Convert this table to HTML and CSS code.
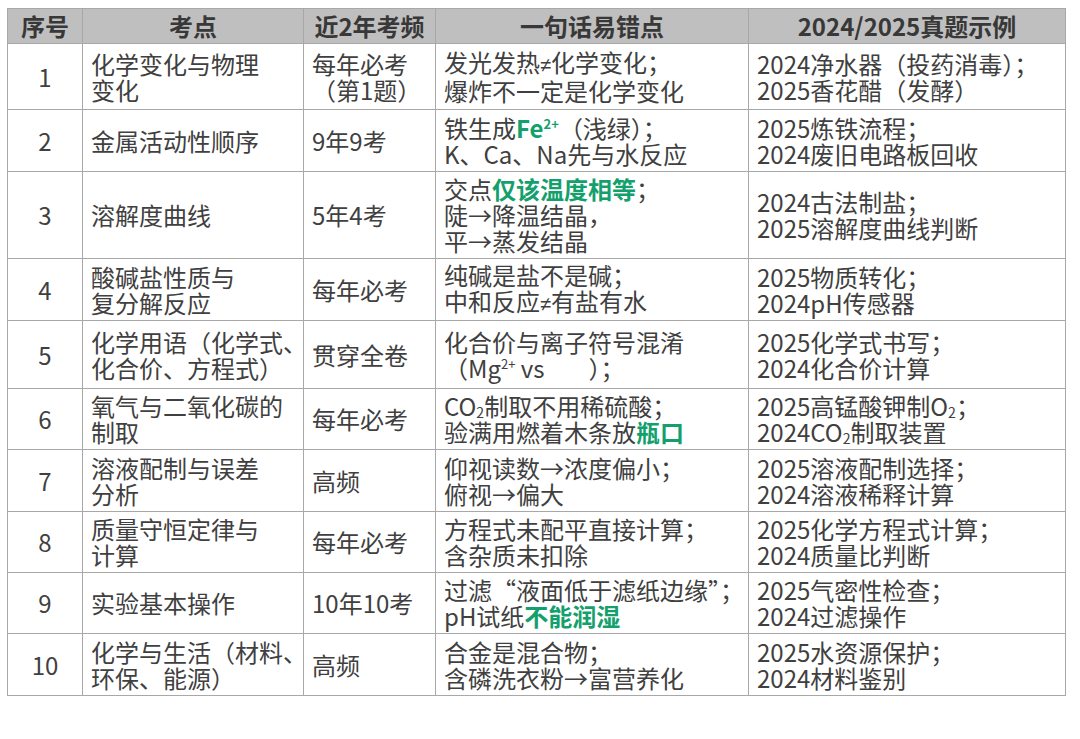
FILE: index.html
```html
<!DOCTYPE html>
<html lang="zh-CN">
<head>
<meta charset="utf-8">
<title>化学考点</title>
<link rel="stylesheet" href="styles.css">
</head>
<body>
<table class="grid">
  <colgroup>
    <col class="c-no">
    <col class="c-topic">
    <col class="c-freq">
    <col class="c-err">
    <col class="c-ex">
  </colgroup>
  <thead>
    <tr class="head">
      <th>序号</th>
      <th>考点</th>
      <th>近2年考频</th>
      <th>一句话易错点</th>
      <th>2024/2025真题示例</th>
    </tr>
  </thead>
  <tbody>
    <tr class="r1">
      <td class="no">1</td>
      <td>化学变化与物理<br>变化</td>
      <td>每年必考<br><span class="paren">（第1题）</span></td>
      <td>发光发热<span class="ne">≠</span>化学变化；<br>爆炸不一定是化学变化</td>
      <td>2024净水器（投药消毒）；<br>2025香花醋（发酵）</td>
    </tr>
    <tr class="r2">
      <td class="no">2</td>
      <td>金属活动性顺序</td>
      <td>9年9考</td>
      <td>铁生成<b class="hl">Fe<sup>2+</sup></b>（浅绿）；<br>K、Ca、Na先与水反应</td>
      <td>2025炼铁流程；<br>2024废旧电路板回收</td>
    </tr>
    <tr class="r3">
      <td class="no">3</td>
      <td>溶解度曲线</td>
      <td>5年4考</td>
      <td>交点<b class="hl">仅该温度相等</b>；<br>陡→降温结晶，<br>平→蒸发结晶</td>
      <td>2024古法制盐；<br>2025溶解度曲线判断</td>
    </tr>
    <tr class="r4">
      <td class="no">4</td>
      <td>酸碱盐性质与<br>复分解反应</td>
      <td>每年必考</td>
      <td>纯碱是盐不是碱；<br>中和反应<span class="ne">≠</span>有盐有水</td>
      <td>2025物质转化；<br>2024pH传感器</td>
    </tr>
    <tr class="r5">
      <td class="no">5</td>
      <td>化学用语（化学式、<br>化合价、方程式）</td>
      <td>贯穿全卷</td>
      <td>化合价与离子符号混淆<br>（Mg<sup>2+</sup> vs<span class="gap"></span>）；</td>
      <td>2025化学式书写；<br>2024化合价计算</td>
    </tr>
    <tr class="r6">
      <td class="no">6</td>
      <td>氧气与二氧化碳的<br>制取</td>
      <td>每年必考</td>
      <td>CO<sub>2</sub>制取不用稀硫酸；<br>验满用燃着木条放<b class="hl">瓶口</b></td>
      <td>2025高锰酸钾制O<sub>2</sub>；<br>2024CO<sub>2</sub>制取装置</td>
    </tr>
    <tr class="r7">
      <td class="no">7</td>
      <td>溶液配制与误差<br>分析</td>
      <td>高频</td>
      <td>仰视读数→浓度偏小；<br>俯视→偏大</td>
      <td>2025溶液配制选择；<br>2024溶液稀释计算</td>
    </tr>
    <tr class="r8">
      <td class="no">8</td>
      <td>质量守恒定律与<br>计算</td>
      <td>每年必考</td>
      <td>方程式未配平直接计算；<br>含杂质未扣除</td>
      <td>2025化学方程式计算；<br>2024质量比判断</td>
    </tr>
    <tr class="r9">
      <td class="no">9</td>
      <td>实验基本操作</td>
      <td>10年10考</td>
      <td><span class="nowrap">过滤“液面低于滤纸边缘”；</span><br>pH试纸<b class="hl">不能润湿</b></td>
      <td>2025气密性检查；<br>2024过滤操作</td>
    </tr>
    <tr class="r10">
      <td class="no">10</td>
      <td>化学与生活（材料、<br>环保、能源）</td>
      <td>高频</td>
      <td>合金是混合物；<br>含磷洗衣粉→富营养化</td>
      <td>2025水资源保护；<br>2024材料鉴别</td>
    </tr>
  </tbody>
</table>
</body>
</html>
```

FILE: styles.css
```css
html, body {
  margin: 0;
  padding: 0;
  background: #ffffff;
}

body {
  padding: 8px 0 0 7px;
  font-family: "Noto Sans CJK SC", "Noto Sans", sans-serif;
  color: #404040;
}

.grid {
  border-collapse: collapse;
  table-layout: fixed;
  width: 1058px;
}

.c-no { width: 75px; }
.c-topic { width: 221px; }
.c-freq { width: 132px; }
.c-err { width: 313px; }
.c-ex { width: 317px; }

.grid th,
.grid td {
  border: 1px solid #a8a8a8;
  font-size: 24px;
  line-height: 26px;
  vertical-align: middle;
  text-align: left;
  padding: 0 4px 0 8px;
  overflow: visible;
  white-space: nowrap;
}

.grid th {
  background: #bfbfbf;
  color: #383838;
  font-weight: 700;
  text-align: center;
  padding: 0;
}

.grid td.no {
  text-align: center;
  padding: 0;
}

.head { height: 35px; }
.r1 { height: 66px; }
.r2 { height: 62px; }
.r3 { height: 87px; }
.r4 { height: 62px; }
.r5 { height: 68px; }
.r6 { height: 61px; }
.r7 { height: 62px; }
.r8 { height: 61px; }
.r9 { height: 61px; }
.r10 { height: 62px; }

.hl {
  color: #14a06c;
  font-weight: 700;
}

.ne {
  font-family: "Liberation Sans", sans-serif;
  font-size: 20px;
}

sup {
  font-size: 13px;
  line-height: 0;
  vertical-align: 9px;
}

sub {
  font-size: 14px;
  line-height: 0;
  vertical-align: -2px;
}

.gap {
  display: inline-block;
  width: 44px;
}

.nowrap {
  white-space: nowrap;
}
```
